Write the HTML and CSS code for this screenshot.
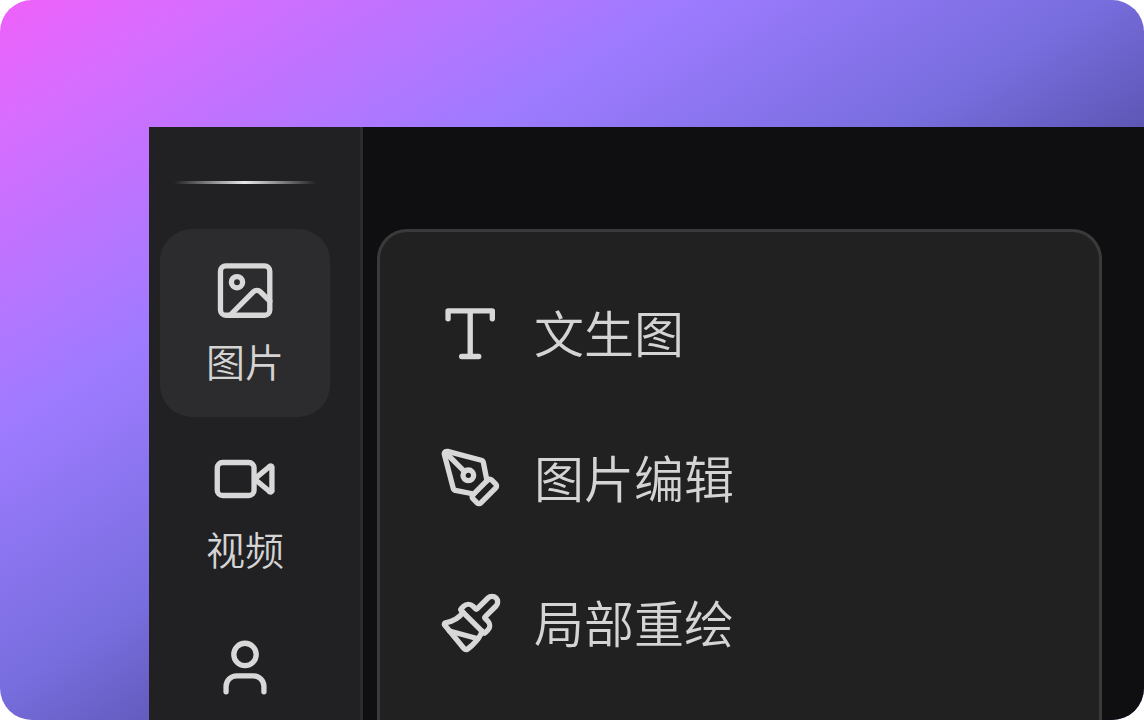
FILE: index.html
```html
<!DOCTYPE html>
<html lang="zh-CN">
<head>
<meta charset="utf-8">
<title>图片</title>
<link rel="stylesheet" href="styles.css">
</head>
<body>
<main class="stage">
  <div class="app">
    <nav class="sidebar">
      <div class="divider"></div>
      <button class="tab active" type="button">
        <svg class="icon" viewBox="0 0 24 24"><rect x="2.800" y="2.600" width="18.500" height="18.500" rx="2"/><circle cx="9" cy="8.700" r="2.100"/><path d="M6.500 21l8.600-8.700a1.900 1.900 0 0 1 2.700 0l3.500 3.500"/></svg>
        <span>图片</span>
      </button>
      <button class="tab" type="button">
        <svg class="icon" viewBox="0 0 24 24"><rect x="1.600" y="5.800" width="13.800" height="12.400" rx="2"/><path d="M15.600 12l5.400-4.500a.5.5 0 0 1 1.100.400v8.200a.5.5 0 0 1-1.100.400z"/></svg>
        <span>视频</span>
      </button>
      <button class="tab" type="button">
        <svg class="icon" viewBox="0 0 24 24"><circle cx="12" cy="7.300" r="4.200"/><path d="M4.900 21.300v-2a4 4 0 0 1 4-4h6.200a4 4 0 0 1 4 4v2"/></svg>
        <span class="dim">数字</span>
      </button>
    </nav>
    <section class="content">
      <div class="menu">
        <button class="item" type="button">
          <svg class="icon" viewBox="0 0 24 24"><path d="M3.400 6.700V3.700h16.600v3M11.700 3.700v17.100M8.500 20.800h6.400"/></svg>
          <span>文生图</span>
        </button>
        <button class="item" type="button">
          <svg class="icon" viewBox="0 0 24 24"><path d="M15.707 21.293a1 1 0 0 1-1.414 0l-1.586-1.586a1 1 0 0 1 0-1.414l5.586-5.586a1 1 0 0 1 1.414 0l1.586 1.586a1 1 0 0 1 0 1.414z"/><path d="m18 13-1.375-6.874a1 1 0 0 0-.746-.776L3.235 2.028a1 1 0 0 0-1.207 1.207L5.350 15.879a1 1 0 0 0 .776.746L13 18"/><path d="m2.300 2.300 7.286 7.286"/><circle cx="11" cy="11" r="2"/></svg>
          <span>图片编辑</span>
        </button>
        <button class="item" type="button">
          <svg class="icon" viewBox="0 0 24 24"><path d="m14.622 17.897-10.680-2.913"/><path d="M18.376 2.622a1 1 0 1 1 3.002 3.002L17.360 9.643a.5.5 0 0 0 0 .707l.944.944a2.410 2.410 0 0 1 0 3.408l-.944.944a.5.5 0 0 1-.707 0L8.354 7.348a.5.5 0 0 1 0-.707l.944-.944a2.410 2.410 0 0 1 3.408 0l.944.944a.5.5 0 0 0 .707 0z"/><path d="M9 8c-1.804 2.710-3.970 3.460-6.583 3.948a.507.507 0 0 0-.302.819l7.320 8.883a1 1 0 0 0 1.185.204C12.735 20.405 16 16.792 16 15"/></svg>
          <span>局部重绘</span>
        </button>
      </div>
    </section>
  </div>
</main>
</body>
</html>
```
FILE: styles.css
```css
* { box-sizing: border-box; }

body {
  margin: 0;
  background: #fff;
  color: #d4d4d4;
  font-family: "Noto Sans CJK SC", sans-serif;
}

.stage {
  display: flex;
  height: 100vh;
  padding: 127px 0 0 149px;
  overflow: hidden;
  border-radius: 32px;
  background: linear-gradient(to bottom right, #ef60f9 0%, #d76dff 9%, #9e7bff 30%, #786edf 48%, #5d56b4 59%);
}

.app {
  display: flex;
  flex: 1;
  min-width: 0;
  background: #0f0f11;
}

.sidebar {
  display: flex;
  flex-direction: column;
  flex: none;
  width: 214px;
  padding: 54px 30px 0 11px;
  border-right: 3px solid #2c2c2e;
  background: #212123;
}

.divider {
  flex: none;
  height: 3px;
  margin: 0 14px 45px;
  background: linear-gradient(to right, transparent, #e8e8e8 50%, transparent);
}

button {
  border: 0;
  background: none;
  color: inherit;
  font-family: inherit;
  font-weight: 350;
  text-align: left;
}

.tab {
  display: flex;
  flex: none;
  flex-direction: column;
  align-items: center;
  height: 188px;
  padding: 30px 0 0;
  border-radius: 32px;
  font-size: 39px;
  line-height: 56px;
  gap: 9px;
}

.active { background: #2c2c2e; }

.dim { color: #111113; }

.icon {
  flex: none;
  width: 64px;
  height: 64px;
  fill: none;
  stroke: #d8d8d8;
  stroke-width: 2;
  stroke-linecap: round;
  stroke-linejoin: round;
}

.content {
  display: flex;
  flex: 1;
  min-width: 0;
  padding: 102px 42px 0 14px;
}

.menu {
  flex: 1;
  padding: 28px 59px 0;
  border: 3px solid #3a3a3a;
  border-bottom: 0;
  border-radius: 30px 30px 0 0;
  background: #212121;
}

.item {
  display: flex;
  align-items: center;
  gap: 31px;
  width: 100%;
  height: 145px;
  padding: 0;
  font-size: 50px;
  line-height: 72px;
}

.item span { padding-bottom: 4px; }
```
